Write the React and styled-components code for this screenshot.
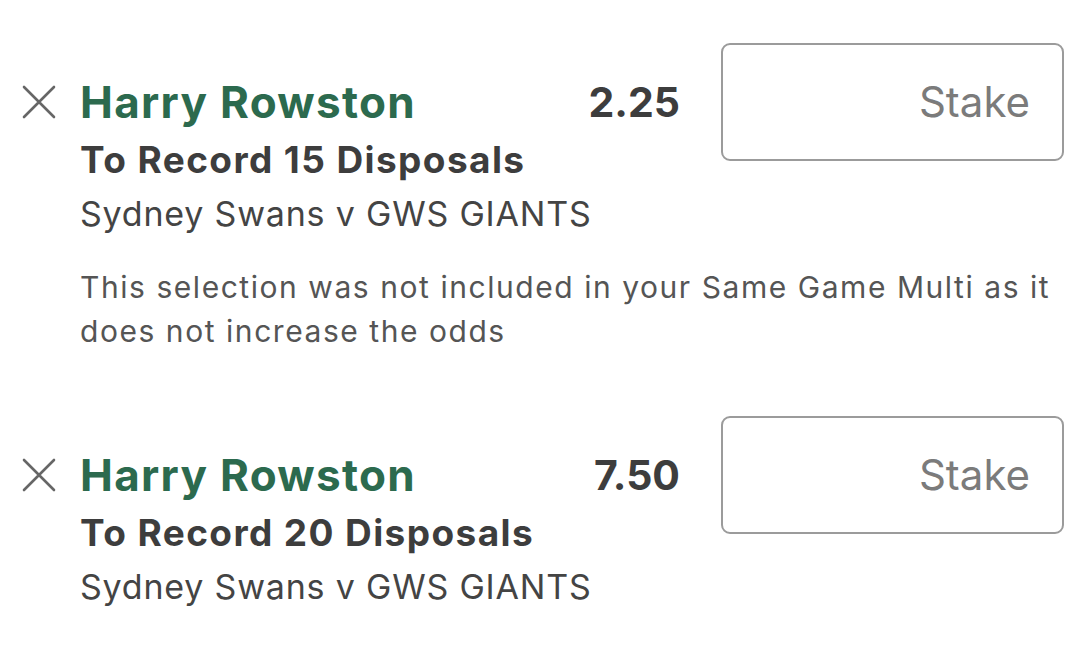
import React from "react";
// STYLE
import styled, { createGlobalStyle } from "styled-components";

const bets = [
  {
    id: 1,
    player: "Harry Rowston",
    market: "To Record 15 Disposals",
    event: "Sydney Swans v GWS GIANTS",
    odds: "2.25",
    note: "This selection was not included in your Same Game Multi as it does not increase the odds",
  },
  {
    id: 2,
    player: "Harry Rowston",
    market: "To Record 20 Disposals",
    event: "Sydney Swans v GWS GIANTS",
    odds: "7.50",
  },
];

const CloseIcon = () => (
  <svg width="34" height="34" viewBox="0 0 34 34" fill="none">
    <path
      d="M2 2 L32 32 M32 2 L2 32"
      stroke="#666666"
      strokeWidth="2.6"
      strokeLinecap="round"
    />
  </svg>
);

const App = () => {
  return (
    <>
      <GlobalStyle />
      <BetSlip>
        {bets.map((bet) => (
          <BetItem key={bet.id} hasNote={!!bet.note}>
            <RemoveButton aria-label="Remove selection">
              <CloseIcon />
            </RemoveButton>
            <Player>{bet.player}</Player>
            <Odds>{bet.odds}</Odds>
            <StakeBox>
              <StakeInput placeholder="Stake" />
            </StakeBox>
            <Market>{bet.market}</Market>
            <Event>{bet.event}</Event>
            {bet.note && <Note>{bet.note}</Note>}
          </BetItem>
        ))}
      </BetSlip>
    </>
  );
};

const GlobalStyle = createGlobalStyle`
  html, body {
    margin: 0;
    padding: 0;
    background: #ffffff;
  }
  body {
    font-family: Inter, "Liberation Sans", sans-serif;
    overflow: hidden;
  }
`;

const BetSlip = styled.div`
  width: 1077px;
  height: 659px;
  box-sizing: border-box;
  padding: 70px 13px 0 20px;
  display: flex;
  flex-direction: column;
  gap: 90px;
`;

const BetItem = styled.div`
  display: grid;
  grid-template-columns: 60px 1fr auto 343px;
  grid-template-rows: 63px auto auto ${(props) => (props.hasNote ? "auto" : "")};
  align-items: center;
`;

const RemoveButton = styled.button`
  grid-column: 1;
  grid-row: 1;
  justify-self: start;
  margin-left: 2px;
  padding: 0;
  border: none;
  background: none;
  display: flex;
  cursor: pointer;
`;

const Player = styled.div`
  grid-column: 2;
  grid-row: 1;
  font-size: 44px;
  line-height: 52px;
  font-weight: 700;
  letter-spacing: 1.3px;
  color: #2c6a4e;
  white-space: nowrap;
`;

const Odds = styled.div`
  grid-column: 3;
  grid-row: 1;
  margin-right: 41px;
  font-size: 41px;
  line-height: 50px;
  font-weight: 700;
  color: #3d3d3d;
`;

const StakeBox = styled.div`
  grid-column: 4;
  grid-row: 1;
  align-self: center;
  height: 118px;
  box-sizing: border-box;
  border: 2px solid #9b9b9b;
  border-radius: 9px;
  display: flex;
  align-items: center;
  padding: 0 32px;
`;

const StakeInput = styled.input`
  width: 100%;
  border: none;
  outline: none;
  background: transparent;
  text-align: right;
  font-family: Inter, "Liberation Sans", sans-serif;
  font-size: 42px;
  color: #3d3d3d;
  padding: 0;

  &::placeholder {
    color: #7b7b7b;
  }
`;

const Market = styled.div`
  grid-column: 2 / 4;
  grid-row: 2;
  font-size: 37px;
  line-height: 54px;
  font-weight: 700;
  letter-spacing: 1.4px;
  color: #3d3d3d;
  white-space: nowrap;
`;

const Event = styled.div`
  grid-column: 2 / 4;
  grid-row: 3;
  font-size: 34px;
  line-height: 54px;
  letter-spacing: 0.8px;
  color: #444444;
  white-space: nowrap;
`;

const Note = styled.p`
  grid-column: 2 / -1;
  grid-row: 4;
  margin: 24px 0 0;
  font-size: 30px;
  line-height: 44px;
  letter-spacing: 1.55px;
  color: #555555;
`;

export default App;
